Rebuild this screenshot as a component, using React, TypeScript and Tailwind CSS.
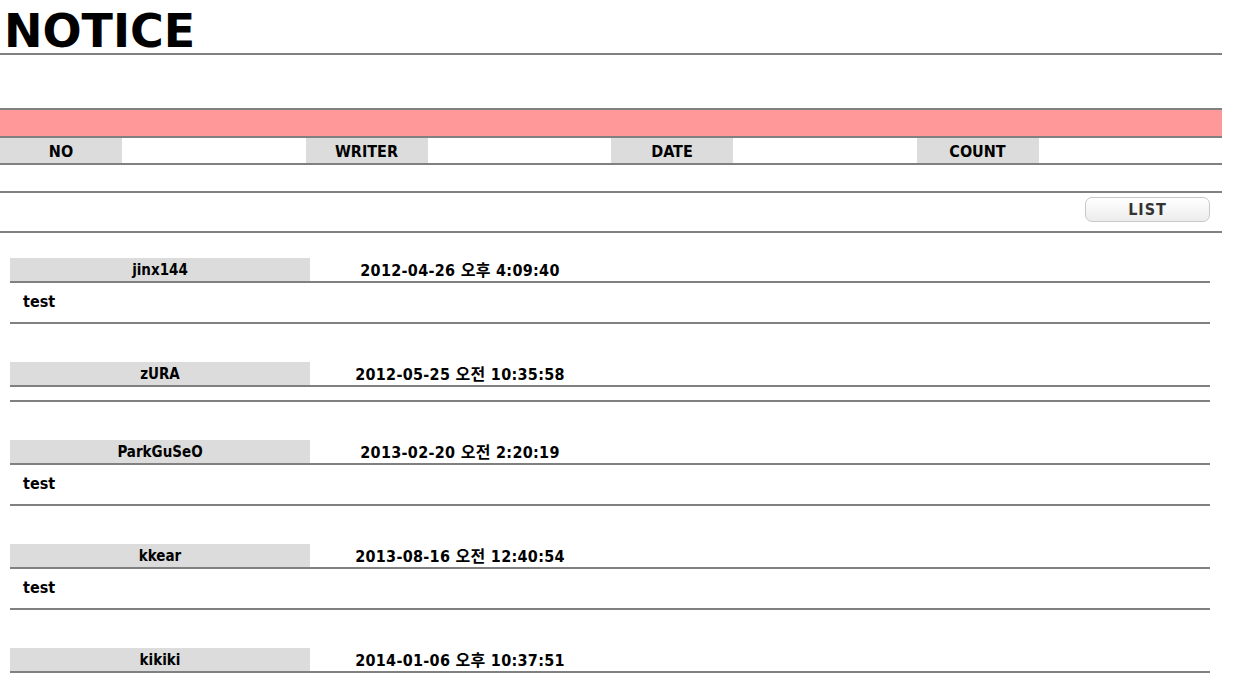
const entries = [
  { writer: "jinx144", date: "2012-04-26 오후 4:09:40", body: "test" },
  { writer: "zURA", date: "2012-05-25 오전 10:35:58", body: "" },
  { writer: "ParkGuSeO", date: "2013-02-20 오전 2:20:19", body: "test" },
  { writer: "kkear", date: "2013-08-16 오전 12:40:54", body: "test" },
  { writer: "kikiki", date: "2014-01-06 오후 10:37:51", body: "" },
]

const HeadCell = ({ label }: { label: string }) => (
  <div className="flex">
    <div className="w-[122px] h-[25px] bg-[#dcdcdc] flex items-center justify-center pt-[2px]">{label}</div>
    <div className="flex-1" />
  </div>
)

export default function App() {
  return (
    <div
      className="w-[1222px] bg-white text-black font-bold"
      style={{ fontFamily: '"DejaVu Sans Condensed", "Noto Sans CJK KR", sans-serif' }}
    >
      <h1
        className="h-[55px] text-[46px] leading-[62px] pl-[4px] border-b-2 border-[#808080]"
        style={{ fontFamily: '"DejaVu Sans", sans-serif' }}
      >
        NOTICE
      </h1>

      <div className="mt-[53px] border-t-2 border-[#808080]">
        <div className="h-[26px] bg-[#ff9999] border-b-2 border-[#808080] box-content" />
        <div className="grid grid-cols-4 text-[16px] border-b-2 border-[#808080]">
          <HeadCell label="NO" />
          <HeadCell label="WRITER" />
          <HeadCell label="DATE" />
          <HeadCell label="COUNT" />
        </div>
        <div className="h-[26px] border-b-2 border-[#808080] box-content" />
        <div className="h-[34px] box-content flex items-start pt-[4px] justify-end pr-[12px] border-b-2 border-[#808080]">
          <button className="w-[125px] h-[25px] rounded-[7px] border border-[#c8c8c8] bg-gradient-to-b from-white to-[#ececec] text-[16px] text-[#333] tracking-[1px]">
            LIST
          </button>
        </div>
      </div>

      <div className="ml-[10px] w-[1200px] pt-[25px]">
        {entries.map((e) => (
          <div key={e.writer} className="mb-[38px]">
            <div className="flex h-[25px] border-b-2 border-[#808080]">
              <div className="w-[300px] bg-[#dcdcdc] flex items-center justify-center pt-[2px] text-[15px]">
                {e.writer}
              </div>
              <div className="w-[300px] flex items-center justify-center pt-[2px] text-[16px] tracking-[0.3px]">
                {e.date}
              </div>
            </div>
            <div
              className={
                e.body
                  ? "h-[41px] border-b-2 border-[#808080] pl-[13px] pt-[7px] text-[16px]"
                  : "h-[15px] border-b-2 border-[#808080]"
              }
            >
              {e.body}
            </div>
          </div>
        ))}
      </div>
    </div>
  )
}
